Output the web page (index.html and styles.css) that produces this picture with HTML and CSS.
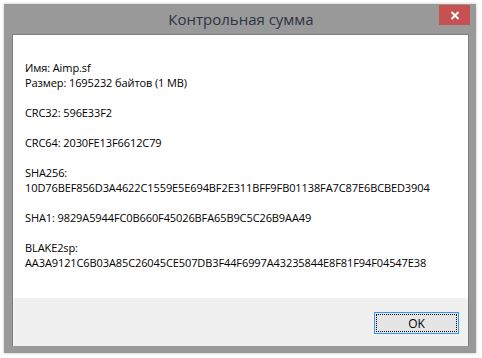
FILE: index.html
```html
<!DOCTYPE html>
<html>
	<head>
		<meta charset="utf-8">
		<title>Контрольная сумма</title>
		<link rel="stylesheet" href="styles.css">
	</head>
	<body>
		<div class="window">
			<div class="titlebar">
				<span class="title">Контрольная сумма</span>
				<a href="javascript:;" class="close">
					<svg width="10" height="9" viewBox="0 0 10 9">
						<path d="M1.5 1 L8.5 8 M8.5 1 L1.5 8" stroke="#fff" stroke-width="2"/>
					</svg>
				</a>
			</div>
			<div class="client">
				<div class="info">
					<p>Имя: Aimp.sf<br>Размер: 1695232 байтов (1 MB)</p>
					<p>CRC32: 596E33F2</p>
					<p>CRC64: 2030FE13F6612C79</p>
					<p>SHA256:<br>10D76BEF856D3A4622C1559E5E694BF2E311BFF9FB01138FA7C87E6BCBED3904</p>
					<p>SHA1: 9829A5944FC0B660F45026BFA65B9C5C26B9AA49</p>
					<p>BLAKE2sp:<br>AA3A9121C6B03A85C26045CE507DB3F44F6997A43235844E8F81F94F04547E38</p>
				</div>
				<div class="footer">
					<button class="btn"><span>OK</span></button>
				</div>
			</div>
		</div>
	</body>
</html>
```
FILE: styles.css
```css
html, body {
	margin: 0;
	padding: 0;
	background: #fff;
}
body {
	padding: 4px 6px 5px 4px;
	font-family: "Segoe UI", "Open Sans", "Noto Sans", sans-serif;
}
.window {
	width: 472px;
	height: 349px;
	box-sizing: border-box;
	padding: 0 7px 7px 8px;
	background: #999;
	box-shadow: 0 0 3px rgba(0,0,0,.25);
	display: flex;
	flex-direction: column;
}
.titlebar {
	height: 30px;
	position: relative;
	display: flex;
	align-items: center;
	justify-content: center;
}
.title {
	font-size: 15px;
	color: #2c3444;
	margin-left: 1px;
}
.close {
	position: absolute;
	right: -1px;
	top: 1px;
	width: 31px;
	height: 20px;
	background: #c75050;
	display: flex;
	align-items: center;
	justify-content: center;
}
.close svg {
	display: block;
}
.client {
	flex: 1;
	background: #fff;
	border: 1px solid #7e7e7e;
	border-bottom: none;
	display: flex;
	flex-direction: column;
}
.info {
	flex: 1;
	padding: 25px 12px 0;
	font-size: 11px;
	line-height: 15px;
	letter-spacing: -0.1px;
	color: #000;
}
.info p {
	margin: 0 0 15px;
}
.footer {
	height: 48px;
	background: #f0f0f0;
	display: flex;
	justify-content: flex-end;
	align-items: flex-start;
	padding: 14px 9px 0 0;
	box-sizing: border-box;
}
.btn {
	width: 85px;
	height: 22px;
	margin: 0;
	padding: 1px;
	border: 1px solid #3399ff;
	background: #e5e5e5;
	font: 12px "Segoe UI", "Open Sans", sans-serif;
	color: #000;
	outline: none;
}
.btn span {
	display: flex;
	align-items: center;
	justify-content: center;
	height: 100%;
	border: 1px dotted #000;
	box-sizing: border-box;
}
```
